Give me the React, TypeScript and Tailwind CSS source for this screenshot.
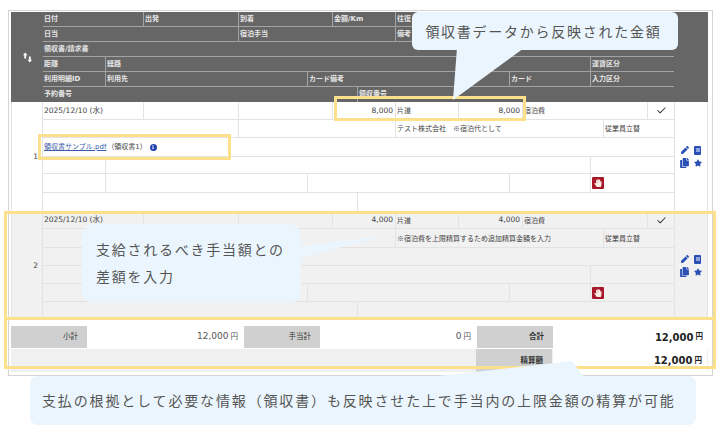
import React from "react";
import { FaPen, FaCopy, FaStar, FaHandPaper, FaInfo } from "react-icons/fa";
import { Check } from "lucide-react";

const FONT = "font-['DejaVu_Sans','Noto_Sans_CJK_JP',sans-serif]";
const JP = "font-['Noto_Sans_CJK_JP','Noto_Sans',sans-serif]";

type C = { w: number; t?: React.ReactNode; cls?: string };

function Line({ cells, h, cell, last }: { cells: C[]; h: number; cell: string; last?: boolean }) {
  return (
    <div className={`flex ${last ? "" : "border-b"} ${cell}`} style={{ height: h }}>
      {cells.map((c, i) => (
        <div
          key={i}
          className={`shrink-0 flex items-center px-[1px] whitespace-nowrap overflow-hidden ${i < cells.length - 1 ? "border-r" : ""} ${cell} ${c.cls ?? ""}`}
          style={{ width: c.w }}
        >
          {c.t}
        </div>
      ))}
    </div>
  );
}

const headerLines: C[][] = [
  [{ w: 101, t: "日付" }, { w: 95, t: "出発" }, { w: 94, t: "到着" }, { w: 63, t: "金額/Km" }, { w: 63, t: "往復" }, { w: 64 }, { w: 68 }, { w: 83 }],
  [{ w: 196, t: "日当" }, { w: 157, t: "宿泊手当" }, { w: 278, t: "備考" }],
  [{ w: 631, t: "領収書/請求書" }],
  [{ w: 63, t: "距離" }, { w: 485, t: "経路" }, { w: 83, t: "運賃区分" }],
  [{ w: 63, t: "利用明細ID" }, { w: 202, t: "利用先" }, { w: 202, t: "カード備考" }, { w: 81, t: "カード" }, { w: 83, t: "入力区分" }],
  [{ w: 315, t: "予約番号" }, { w: 316, t: "領収番号" }],
];

function Num({ v }: { v: string }) {
  return <span className="ml-auto pr-[1px] text-[7.5px]">{v}</span>;
}

function Stamp() {
  return (
    <span className="flex h-[12px] w-[12px] items-center justify-center rounded-[1px] bg-[#a9182a]">
      <FaHandPaper className="h-[8px] w-[8px] text-[#fbeee6]" />
    </span>
  );
}

function Actions() {
  return (
    <div className="grid w-[24px] grid-cols-2 gap-x-[2px] gap-y-[3px] text-[#2b50b5]">
      <FaPen className="h-[8px] w-[8px] justify-self-center self-center" />
      <span className="flex h-[9px] w-[7px] items-center justify-center justify-self-center rounded-[1px] bg-[#2b50b5]">
        <span className="h-[4px] w-[4px] bg-[#8ea3dd]" />
      </span>
      <FaCopy className="h-[10px] w-[9px] justify-self-center" />
      <FaStar className="h-[8px] w-[8px] justify-self-center self-center" />
    </div>
  );
}

function DataRow({ n, amount, note, link, heights, bg }: {
  n: string; amount: string; note: React.ReactNode; link?: React.ReactNode; heights: number[]; bg: string;
}) {
  const cell = "border-[#e3e3e3]";
  return (
    <div className={`flex border-b border-l border-r text-[7px] text-[#444] ${cell} ${bg}`}>
      <div className={`flex w-[31px] shrink-0 items-center justify-end border-r pr-[4px] text-[7.5px] ${cell}`}>
        <span>{n}</span>
      </div>
      <div className="w-[631px] shrink-0">
        <Line cell={cell} h={heights[0]} cells={[
          { w: 101, t: <span className="text-[7.5px]">2025/12/10 (水)</span> }, { w: 95 }, { w: 94 },
          { w: 63, t: <Num v={amount} /> }, { w: 63, t: <span className={JP}>片道</span> },
          { w: 64, t: <Num v={amount} /> },
          { w: 125, t: <span className={JP}>宿泊費</span> },
          { w: 26, t: <Check strokeWidth={2.2} className="mx-auto h-[11px] w-[11px] text-[#333]" /> },
        ]} />
        <Line cell={cell} h={heights[1]} cells={[
          { w: 196 }, { w: 157 }, { w: 208, t: <span className={JP}>{note}</span> },
          { w: 70, t: <span className={JP}>従業員立替</span> },
        ]} />
        <Line cell={cell} h={heights[2]} cells={[{ w: 631, t: link }]} />
        <Line cell={cell} h={heights[3]} cells={[{ w: 63 }, { w: 485 }, { w: 83 }]} />
        <Line cell={cell} h={heights[4]} cells={[
          { w: 63 }, { w: 202 }, { w: 202 }, { w: 81 },
          { w: 83, t: <Stamp /> },
        ]} />
        <Line last cell={cell} h={heights[5]} cells={[{ w: 315 }, { w: 316 }]} />
      </div>
      <div className={`flex w-[33px] shrink-0 items-center justify-center border-l ${cell}`}>
        <Actions />
      </div>
    </div>
  );
}

function Total({ label, value, strong, end }: { label: string; value: string; strong?: boolean; end?: boolean }) {
  return (
    <>
      <div className={`flex w-[76px] shrink-0 items-center justify-end bg-[#d0d0d0] pr-[9px] text-[7.5px] text-[#333] ${strong ? "font-bold" : ""}`}>{label}</div>
      <div className={`flex shrink-0 items-center justify-end bg-white pr-[5px] ${end ? "w-[154px]" : "w-[155px]"} ${strong ? "text-[10px] font-bold text-[#222]" : "text-[9px] text-[#555]"}`}>
        {value}
        <span className="ml-[2px] text-[7.5px]">円</span>
      </div>
    </>
  );
}

export default function App() {
  return (
    <div className={`relative h-[433px] w-[721px] overflow-hidden bg-white ${FONT}`}>
      <div className="pl-[8px] pt-[10px]">
        <div className="h-[366px] w-[705px] border border-[#d4d4d4] pl-[2px] pr-[4px] pt-[1px]">
          <div className="flex h-[90px] bg-[#666666] text-[7px] font-bold text-[#e6e6e6]">
            <div className="flex w-[32px] shrink-0 items-center justify-center">
              <svg viewBox="0 0 12 12" className="h-[11px] w-[11px] fill-white">
                <path d="M3.5 0.5 6 3.5H4.5V7H2.5V3.5H1Z" />
                <path d="M8.5 11.5 11 8.5H9.5V5H7.5V8.5H6Z" />
              </svg>
            </div>
            <div className="w-[631px] shrink-0">
              {headerLines.map((cells, i) => (
                <Line key={i} cells={cells} h={15} cell="border-[#a3a3a3]" last={i === 5} />
              ))}
            </div>
          </div>
          <DataRow
            n="1" amount="8,000" bg="bg-white"
            heights={[18, 18, 19, 17, 19, 18]}
            note="テスト株式会社　※宿泊代として"
            link={
              <span className="flex items-center">
                <span className="text-[#3b5aa8] underline">領収書サンプル.pdf</span>
                <span className="ml-[1px]">（領収書1）</span>
                <span className="ml-[3px] flex h-[7px] w-[7px] items-center justify-center rounded-full bg-[#2343b0]">
                  <FaInfo className="h-[4px] w-[4px] text-white" />
                </span>
              </span>
            }
          />
          <DataRow
            n="2" amount="4,000" bg="bg-[#f1f1f1]"
            heights={[17, 19, 18, 18, 18, 17]}
            note="※宿泊費を上限精算するため追加精算金額を入力"
          />
          <div className="h-[6px]" />
          <div className="flex h-[22px] gap-[1px]">
            <Total label="小計" value="12,000" />
            <Total label="手当計" value="0" />
            <Total label="合計" value="12,000" strong end />
          </div>
          <div className="mt-[1px] flex h-[23px] gap-[1px] bg-[#f0f0f0]">
            <div className="w-[464px] shrink-0" />
            <Total label="精算額" value="12,000" strong end />
          </div>
        </div>
      </div>

      {/* highlight frames */}
      <div className="absolute left-[334px] top-[96px] h-[25px] w-[192px] border-[3px] border-[#fde08a]" />
      <div className="absolute left-[38px] top-[134px] h-[26px] w-[193px] border-[3px] border-[#fde08a]" />
      <div className="absolute left-[4px] top-[211px] h-[109px] w-[712px] border-[3px] border-[#fde08a]" />
      <div className="absolute left-[4px] top-[317px] h-[52px] w-[712px] border-[3px] border-[#fde08a]" />

      {/* callout tails */}
      <svg className="absolute left-0 top-0 h-[433px] w-[721px]" viewBox="0 0 721 433">
        <polygon points="457,48 524,48 453,100" fill="#ebf5fd" />
        <polygon points="299,247 388,235 299,258" fill="#ebf5fd" />
        <polygon points="420,378 572,361 585,378" fill="#ebf5fd" />
      </svg>

      {/* callouts */}
      <div className={`absolute left-[412px] top-[12px] flex h-[38px] w-[266px] items-center justify-center rounded-[6px] bg-[#ebf5fd] pr-[3px] text-[14px] tracking-[1.75px] text-[#555] ${JP}`}>
        領収書データから反映された金額
      </div>
      <div className={`absolute left-[82px] top-[224px] h-[79px] w-[219px] rounded-[12px] bg-[#ebf5fd] pl-[14px] pt-[12px] text-[14px] leading-[27px] tracking-[1.75px] text-[#555] ${JP}`}>
        <div>支給されるべき手当額との</div>
        <div>差額を入力</div>
      </div>
      <div className={`absolute left-[30px] top-[376px] flex h-[49px] w-[666px] items-center rounded-[8px] bg-[#ebf5fd] pl-[12px] text-[14px] tracking-[1.85px] whitespace-nowrap text-[#555] ${JP}`}>
        支払の根拠として必要な情報（領収書）も反映させた上で手当内の上限金額の精算が可能
      </div>
    </div>
  );
}
